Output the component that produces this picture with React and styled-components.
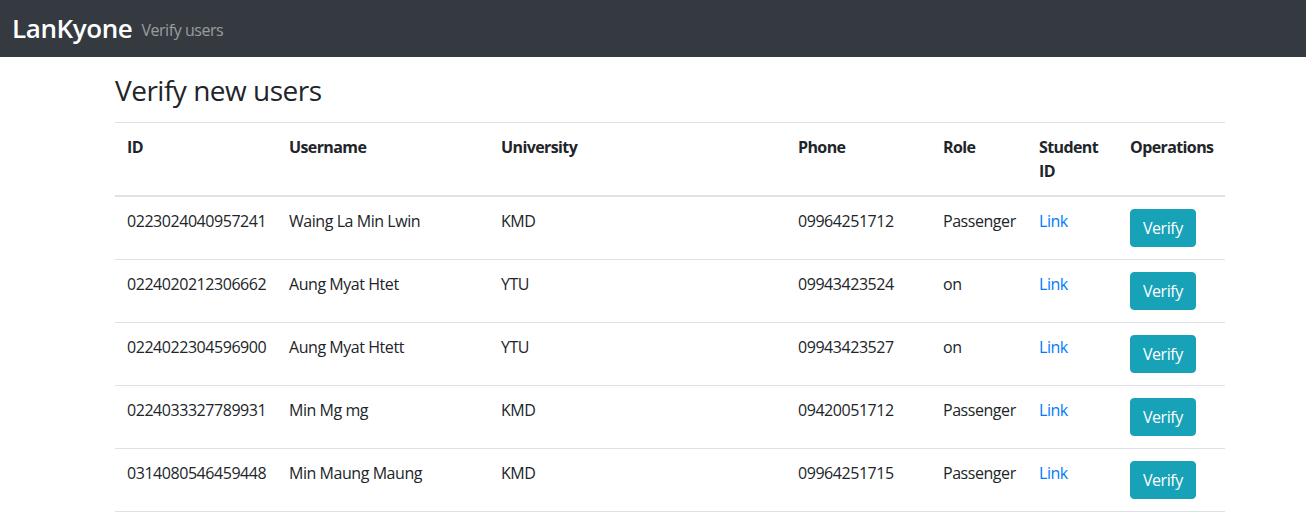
import React from 'react';
import styled, { createGlobalStyle } from 'styled-components';

const GlobalStyle = createGlobalStyle`
  body {
    margin: 0;
    font-family: "Segoe UI", "Open Sans", "Noto Sans", sans-serif;
    font-size: 16px;
    line-height: 1.5;
    letter-spacing: -0.45px;
    color: #212529;
    background: #fff;
  }
  * {
    box-sizing: border-box;
  }
`;

const Navbar = styled.nav`
  height: 57px;
  background-color: #343a40;
  display: flex;
  align-items: center;
  padding: 0 12px 2px;
  gap: 9px;
`;

const Brand = styled.span`
  color: #fff;
  font-size: 26px;
  font-weight: 600;
  line-height: 1;
  letter-spacing: -0.4px;
`;

const NavText = styled.span`
  color: rgba(255, 255, 255, 0.5);
  font-size: 16px;
  padding-top: 4px;
`;

const Container = styled.main`
  width: 1110px;
  margin: 17px 0 0 115px;
`;

const Title = styled.h3`
  margin: 0 0 14px;
  font-size: 28px;
  font-weight: 500;
  line-height: 1.2;
  letter-spacing: -0.5px;
`;

const Table = styled.table`
  width: 100%;
  border-collapse: collapse;
  table-layout: fixed;
`;

const Col = styled.col`
  width: ${(props) => props.w}px;
`;

const Th = styled.th`
  text-align: left;
  vertical-align: top;
  padding: 12px;
  font-weight: 700;
  letter-spacing: -0.6px;
  border-top: 1px solid #dee2e6;
  border-bottom: 2px solid #dee2e6;
`;

const Td = styled.td`
  vertical-align: top;
  padding: 12px;
  border-top: 1px solid #dee2e6;
  border-bottom: 1px solid #dee2e6;
  white-space: nowrap;
`;

const Link = styled.a`
  color: #007bff;
  text-decoration: none;
`;

const VerifyButton = styled.button`
  font-family: inherit;
  font-size: 16px;
  line-height: 1.5;
  letter-spacing: -0.45px;
  color: #fff;
  background-color: #17a2b8;
  border: 1px solid #17a2b8;
  border-radius: 4px;
  padding: 6px 12px;
  cursor: pointer;
`;

const widths = [162, 212, 297, 145, 96, 91, 107];

const users = [
  { id: '0223024040957241', name: 'Waing La Min Lwin', uni: 'KMD', phone: '09964251712', role: 'Passenger' },
  { id: '0224020212306662', name: 'Aung Myat Htet', uni: 'YTU', phone: '09943423524', role: 'on' },
  { id: '0224022304596900', name: 'Aung Myat Htett', uni: 'YTU', phone: '09943423527', role: 'on' },
  { id: '0224033327789931', name: 'Min Mg mg', uni: 'KMD', phone: '09420051712', role: 'Passenger' },
  { id: '0314080546459448', name: 'Min Maung Maung', uni: 'KMD', phone: '09964251715', role: 'Passenger' },
];

export default function App() {
  return (
    <>
      <GlobalStyle />
      <Navbar>
        <Brand>LanKyone</Brand>
        <NavText>Verify users</NavText>
      </Navbar>
      <Container>
        <Title>Verify new users</Title>
        <Table>
          <colgroup>
            {widths.map((w, i) => (
              <Col key={i} w={w} />
            ))}
          </colgroup>
          <thead>
            <tr>
              <Th>ID</Th>
              <Th>Username</Th>
              <Th>University</Th>
              <Th>Phone</Th>
              <Th>Role</Th>
              <Th>Student ID</Th>
              <Th>Operations</Th>
            </tr>
          </thead>
          <tbody>
            {users.map((u) => (
              <tr key={u.id}>
                <Td>{u.id}</Td>
                <Td>{u.name}</Td>
                <Td>{u.uni}</Td>
                <Td>{u.phone}</Td>
                <Td>{u.role}</Td>
                <Td>
                  <Link href="#">Link</Link>
                </Td>
                <Td>
                  <VerifyButton>Verify</VerifyButton>
                </Td>
              </tr>
            ))}
          </tbody>
        </Table>
      </Container>
    </>
  );
}
